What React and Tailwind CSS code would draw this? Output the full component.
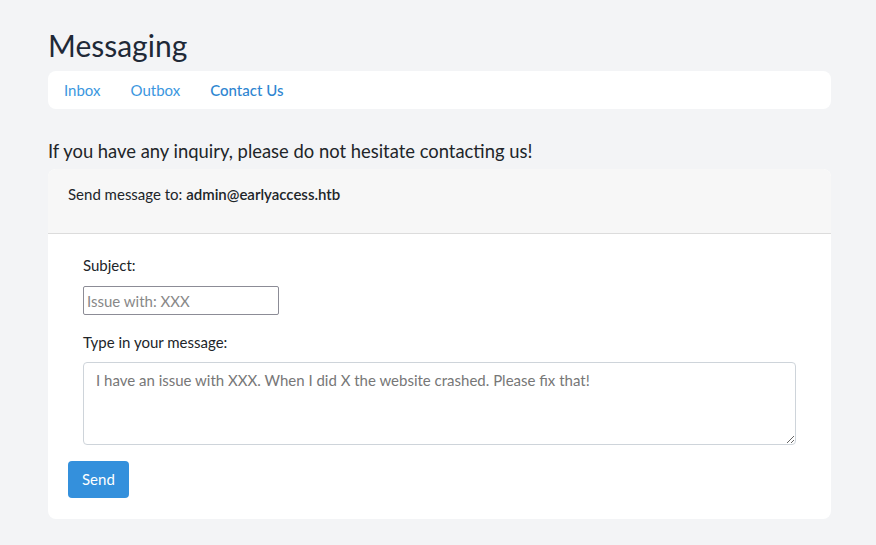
import { useState } from 'react';

const tabs = ['Inbox', 'Outbox', 'Contact Us'];

export default function App() {
  const [active] = useState('Contact Us');

  return (
    <div className="min-h-[545px] bg-[#f3f4f6] font-['Lato',sans-serif] text-[#212529]">
      <div className="ml-[48px] w-[783px] pt-[28px]">
        <h1 className="text-[30px] leading-[34px] text-[#1f2937]">Messaging</h1>

        <nav className="mt-[9px] flex h-[38px] items-center gap-[30px] rounded-lg bg-white px-4 text-[15px]">
          {tabs.map((t) => (
            <a
              key={t}
              href="#"
              className={t === active ? 'font-medium text-[#2f86d1]' : 'text-[#3b97e0]'}
            >
              {t}
            </a>
          ))}
        </nav>

        <p className="mt-[30px] text-[18.4px] leading-[24px]">
          If you have any inquiry, please do not hesitate contacting us!
        </p>

        {/* Card */}
        <div className="mt-[6px] overflow-hidden rounded-lg bg-white">
          <div className="h-[65px] border-b border-[#dcdcdc] bg-[#f7f7f7] px-5 pt-[14px] text-[15px]">
            Send message to: <span className="font-semibold">admin@earlyaccess.htb</span>
          </div>

          <div className="px-5 pb-[21px] pt-[21px]">
            <div className="px-[15px] text-[15px]">
              <label className="block leading-[20px]">Subject:</label>
              <input
                placeholder="Issue with: XXX"
                className="mt-[11px] h-[29px] w-[196px] rounded-[2px] border border-[#8c8c96] px-[3px] text-[15px] placeholder:text-[#888]"
              />
              <label className="mt-[17px] block leading-[20px]">Type in your message:</label>
              <textarea
                placeholder="I have an issue with XXX. When I did X the website crashed. Please fix that!"
                className="mt-[10px] block h-[83px] w-full rounded-[4px] border border-[#ced4da] px-3 py-[6px] text-[15px] placeholder:text-[#777]"
              />
            </div>
            <button className="mt-[16px] h-[37px] rounded-[4px] bg-[#3490dc] px-[14px] text-[15px] text-white">
              Send
            </button>
          </div>
        </div>
      </div>
    </div>
  );
}
